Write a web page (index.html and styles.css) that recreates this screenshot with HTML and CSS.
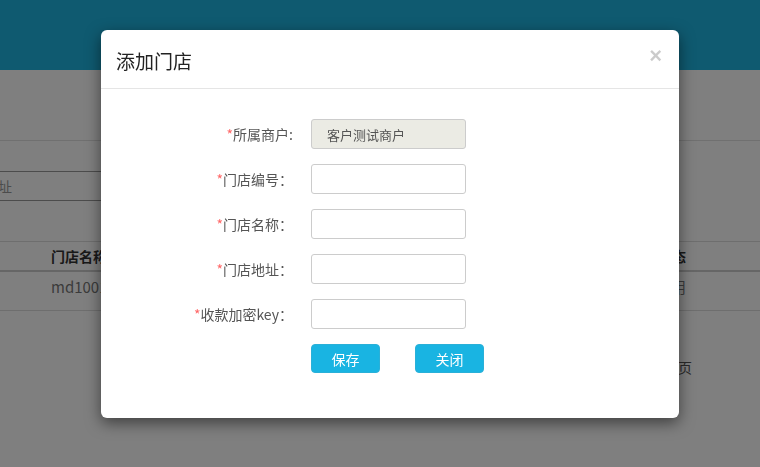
FILE: index.html
```html
<!DOCTYPE html>
<html lang="zh-CN">
<head>
    <meta charset="UTF-8">
    <meta name="viewport" content="width=device-width, initial-scale=1.0">
    <title>门店管理</title>
    <link rel="stylesheet" href="styles.css">
</head>
<body>
    <div class="topbar"></div>
    <div class="crumbs"></div>
    <div class="search">
        <div class="search-input">门店地址</div>
    </div>
    <div class="table">
        <div class="table-head">
            <span>门店名称</span>
            <span>状态</span>
        </div>
        <div class="table-row">
            <span>md1001</span>
            <span>启用</span>
        </div>
    </div>
    <div class="pager">末页</div>

    <div class="backdrop"></div>
    <div class="modal">
        <div class="modal-header">
            <h4 class="modal-title">添加门店</h4>
            <span class="close">&times;</span>
        </div>
        <div class="modal-body">
            <div class="form-row">
                <label><i>*</i>所属商户:</label>
                <input type="text" class="disabled" value="客户测试商户" disabled>
            </div>
            <div class="form-row">
                <label><i>*</i>门店编号：</label>
                <input type="text">
            </div>
            <div class="form-row">
                <label><i>*</i>门店名称：</label>
                <input type="text">
            </div>
            <div class="form-row">
                <label><i>*</i>门店地址：</label>
                <input type="text">
            </div>
            <div class="form-row">
                <label><i>*</i>收款加密key：</label>
                <input type="text">
            </div>
            <div class="form-actions">
                <button>保存</button>
                <button>关闭</button>
            </div>
        </div>
    </div>
</body>
</html>
```

FILE: styles.css
```css
body { margin: 0; font-family: "Noto Sans CJK SC", "Noto Sans", sans-serif; font-size: 14px; color: #333; background: #fff; overflow: hidden; height: 467px; }
.topbar { height: 70px; background: #1eb4e0; }
.crumbs { height: 70px; border-bottom: 1px solid #e0e0e0; }
.search { padding-top: 30px; }
.search-input { width: 160px; height: 28px; margin-left: -1px; border: 1px solid #999; line-height: 28px; text-indent: -44px; color: #999; font-size: 14px; overflow: hidden; white-space: nowrap; }
.table { margin-top: 40px; border-top: 1px solid #ddd; }
.table-head, .table-row { display: flex; justify-content: space-between; padding: 0 74px 0 51px; }
.table-head { height: 28px; line-height: 28px; font-weight: bold; color: #333; border-bottom: 2px solid #ccc; }
.table-row { height: 38px; line-height: 30px; color: #777; border-bottom: 1px solid #ddd; font-size: 15px; }
.pager { text-align: right; padding: 46px 68px 0 0; color: #555; }

.backdrop { position: fixed; top: 0; left: 0; right: 0; bottom: 0; background: rgba(0, 0, 0, 0.5); }
.modal { position: absolute; top: 30px; left: 101px; width: 578px; height: 388px; background: #fff; border-radius: 6px; box-shadow: 0 5px 15px rgba(0, 0, 0, 0.5); }
.modal-header { display: flex; justify-content: space-between; align-items: center; padding: 15px; border-bottom: 1px solid #e5e5e5; height: 28px; }
.modal-title { margin: 0; font-size: 19px; font-weight: normal; color: #222; padding-top: 2px; }
.close { font-family: Arial, sans-serif; font-size: 22px; font-weight: bold; color: #000; opacity: 0.2; margin-top: -6px; margin-right: 2px; }
.modal-body { padding: 30px 0 0 0; }
.form-row { display: flex; align-items: center; margin-bottom: 15px; }
.form-row label { width: 192px; text-align: right; color: #555; font-size: 14px; }
.form-row label i { font-style: normal; color: #f66; }
.form-row input { width: 155px; height: 30px; box-sizing: border-box; margin-left: 18px; border: 1px solid #ccc; border-radius: 3px; padding: 0 15px; font-family: inherit; font-size: 13px; color: #555; background: #fff; }
.form-row input.disabled { background: #ebebe4; }
.form-actions { display: flex; gap: 35px; padding-left: 210px; }
.form-actions button { width: 69px; height: 29px; border: 1px solid #2ab0d8; border-radius: 4px; background: #19b4e2; color: #fff; font-family: inherit; font-size: 14px; padding: 0; }
```
